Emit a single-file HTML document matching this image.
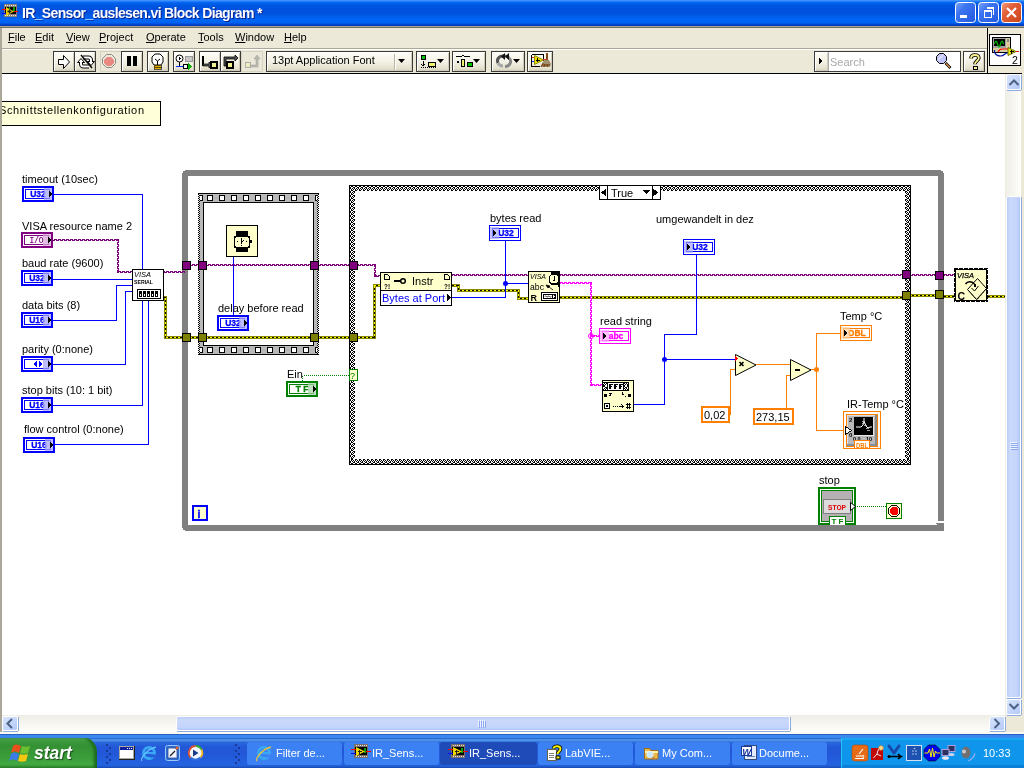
<!DOCTYPE html>
<html><head><meta charset="utf-8">
<style>
html,body{margin:0;padding:0;width:1024px;height:768px;overflow:hidden;background:#fff;font-family:"Liberation Sans",sans-serif;}
.a{position:absolute;box-sizing:border-box;will-change:transform;}
#title{left:0;top:0;width:1024px;height:26px;background:linear-gradient(to bottom,#3F95FE 0px,#3A8DFB 1px,#0A6CF8 2px,#0062EE 3px,#0058E0 5px,#0052DE 8px,#0052DE 13px,#005CEA 16px,#0066F5 20px,#0062F0 23px,#0048D4 24px,#003CC0 25px);}
#title .t{left:22px;top:5px;color:#fff;font-weight:bold;font-size:14px;white-space:nowrap;letter-spacing:-0.65px;text-shadow:1px 1px 0 #0A1E8C;}
.menu{top:28px;height:20px;font-size:11px;color:#000;}
.menu span{position:absolute;top:3px;white-space:nowrap;}
.tb{top:51px;height:22px;width:22px;border:1px solid #3C3C3C;background:linear-gradient(to bottom,#FBFAF4,#E8E5D6);border-radius:1px;}
.btn{top:51px;height:21px;border:1px solid #3C3B37;background:linear-gradient(to bottom,#FEFDF6 0%,#F4F2E6 50%,#E3DFCC 90%,#C9C5B0 100%);box-shadow:inset 1px 1px 0 #fff,inset -1px -1px 0 #CFCBB8;}
.btnd{top:51px;height:21px;border:1px solid #D5D2C2;background:#EBE8DA;}
</style></head>
<body>
<!-- window frame -->
<div class="a" id="title"><div class="a t">IR_Sensor_auslesen.vi Block Diagram *</div></div>
<div class="a" style="left:0;top:26px;width:1024px;height:1px;background:#A8A48E"></div>
<div class="a" style="left:0;top:27px;width:1024px;height:1px;background:#716F64"></div>
<div class="a" style="left:0;top:28px;width:1024px;height:46px;background:#ECE9D8"></div>
<div class="a" style="left:0;top:28px;width:2px;height:706px;background:#ACA899"></div>
<div class="a" style="left:2px;top:48px;width:985px;height:1px;background:#ACA899"></div>
<div class="a" style="left:2px;top:49px;width:985px;height:1px;background:#FFFFFF"></div>
<div class="a" style="left:987px;top:28px;width:1px;height:45px;background:#000"></div>
<div class="a" style="left:2px;top:73px;width:1020px;height:1px;background:#000"></div>
<div class="a menu" style="left:0;width:987px;">
 <span style="left:8px"><u>F</u>ile</span>
 <span style="left:35px"><u>E</u>dit</span>
 <span style="left:66px"><u>V</u>iew</span>
 <span style="left:99px"><u>P</u>roject</span>
 <span style="left:146px"><u>O</u>perate</span>
 <span style="left:198px"><u>T</u>ools</span>
 <span style="left:235px"><u>W</u>indow</span>
 <span style="left:284px"><u>H</u>elp</span>
</div>

<!-- toolbar buttons -->
<div class="a btn" style="left:53px;width:22px"></div>
<div class="a btn" style="left:74px;width:22px"></div>
<div class="a btnd" style="left:100px;width:22px"></div>
<div class="a btn" style="left:121px;width:22px"></div>
<div class="a btn" style="left:147px;width:22px"></div>
<div class="a btn" style="left:173px;width:22px"></div>
<div class="a btn" style="left:199px;width:22px"></div>
<div class="a btn" style="left:220px;width:21px"></div>
<div class="a btnd" style="left:241px;width:22px"></div>
<div class="a btn" style="left:266px;width:147px"></div>
<div class="a btn" style="left:416px;width:34px"></div>
<div class="a btn" style="left:452px;width:34px"></div>
<div class="a btn" style="left:491px;width:34px"></div>
<div class="a btn" style="left:527px;width:26px"></div>
<div class="a btn" style="left:963px;width:22px"></div>
<div class="a" style="left:814px;top:51px;width:147px;height:21px;border:1px solid #3C3C3C;background:#fff"></div>
<div class="a btn" style="left:815px;top:52px;width:14px;height:19px;border:none;border-right:1px solid #aaa"></div>
<div class="a" style="left:989px;top:34px;width:32px;height:32px;border:1px solid #000;background:#fff"></div>
<div class="a" style="left:272px;top:54px;font-size:11px;white-space:nowrap;color:#000">13pt Application Font</div>
<div class="a" style="left:830px;top:56px;font-size:11px;white-space:nowrap;color:#A8A8A8">Search</div>
<svg class="a" style="left:0;top:0" width="1024" height="74" shape-rendering="crispEdges">
 <!-- run arrow -->
 <path d="M58.5 59.5h5v-4l6 6.5-6 6.5v-4h-5z" fill="#fff" stroke="#000" shape-rendering="auto"/>
 <!-- run continuously -->
 <g shape-rendering="auto" fill="none">
  <path d="M83 57.5h5.5a2.5 2.5 0 0 1 2.5 2.5v1" stroke="#000" stroke-width="4"/>
  <path d="M89 66.5h-5.5a2.5 2.5 0 0 1-2.5-2.5v-1" stroke="#000" stroke-width="4"/>
  <path d="M87.5 61.5h7l-3.5 4z" fill="#fff" stroke="#000"/>
  <path d="M77.5 62.5h7l-3.5-4z" fill="#fff" stroke="#000"/>
  <path d="M83 57.5h5.5a2.5 2.5 0 0 1 2.5 2.5v2" stroke="#fff" stroke-width="2"/>
  <path d="M89 66.5h-5.5a2.5 2.5 0 0 1-2.5-2.5v-2" stroke="#fff" stroke-width="2"/>
  <path d="M81 55l11 13" stroke="#000" stroke-width="1.4"/>
 </g>
 <!-- abort -->
 <path d="M106.5 54.5h5l4 4v5l-4 4h-5l-4-4v-5z" fill="none" stroke="#8C8A80" shape-rendering="auto"/>
 <path d="M107 57h4l3 3v3l-3 3h-4l-3-3v-3z" fill="#E88880" shape-rendering="auto"/>
 <!-- pause -->
 <rect x="127" y="56" width="4" height="10" fill="#000"/>
 <rect x="133" y="56" width="4" height="10" fill="#000"/>
 <!-- bulb -->
 <path d="M155 54h5l3 3v5l-2 3h-7l-2-3v-5z" fill="#fff" stroke="#000" shape-rendering="auto"/>
 <path d="M155 59l2.5 2 2.5-2M157.5 61v4" fill="none" stroke="#000" shape-rendering="auto"/>
 <rect x="154" y="65" width="7" height="2" fill="#E0B000" stroke="#000" stroke-width="0.6"/>
 <rect x="154" y="67" width="7" height="2" fill="#E0B000" stroke="#000" stroke-width="0.6"/>
 <!-- retain -->
 <circle cx="179.5" cy="58.5" r="3.5" fill="#fff" stroke="#000" shape-rendering="auto"/>
 <path d="M178.5 56.5l2.5 2-2.5 2z" fill="#000"/>
 <rect x="185" y="56" width="7" height="5" fill="#C8C8C8" stroke="#999"/>
 <path d="M179.5 62v4" stroke="#000"/>
 <rect x="176" y="66" width="13" height="1" fill="#0030FF"/>
 <rect x="183" y="64" width="4" height="4" fill="#fff" stroke="#000"/>
 <path d="M188 63l4 3.5-4 3.5z" fill="#00B000"/>
 <!-- step into -->
 <path d="M203 56v9h5" fill="none" stroke="#000" stroke-width="2"/>
 <path d="M203 64h6v-2l3 3-3 3v-2h-6z" fill="#555" stroke="#000" stroke-width="0.7" shape-rendering="auto"/>
 <rect x="211" y="62" width="6" height="6" fill="#F0F090" stroke="#000" stroke-width="1.5"/>
 <!-- step over -->
 <path d="M224 66v-9h11v-2l3 3-3 3v-2h-9v7z" fill="#555" stroke="#000" stroke-width="0.8" shape-rendering="auto"/>
 <rect x="227" y="62" width="6" height="6" fill="#F0F090" stroke="#000" stroke-width="1.5"/>
 <!-- step out disabled -->
 <rect x="245" y="62" width="5" height="5" fill="#EEEEC0" stroke="#B0B0A8"/>
 <path d="M250 65h6v-6h-2l3-4 3 4h-2v8h-8z" fill="#B8B8B0" stroke="#A8A8A0" stroke-width="0.6" shape-rendering="auto"/>
 <!-- font dropdown -->
 <rect x="394" y="54" width="1" height="16" fill="#B8B4A2"/>
 <rect x="395" y="54" width="1" height="16" fill="#fff"/>
 <path d="M398 59h7l-3.5 4z" fill="#000" shape-rendering="auto"/>
 <!-- align -->
 <rect x="421" y="55" width="4" height="4" fill="#00C000" stroke="#000"/>
 <path d="M423 61v5M421 64l2 2 2-2" stroke="#000" fill="none"/>
 <rect x="428" y="62" width="7" height="4" fill="#F0F070" stroke="#000"/>
 <path d="M421 67h15" stroke="#000" stroke-dasharray="1 1"/>
 <path d="M437 59h7l-3.5 4z" fill="#000" shape-rendering="auto"/>
 <!-- distribute -->
 <path d="M456 56h6l1-1 1 1h6" stroke="#000" fill="none"/>
 <rect x="457" y="61" width="2" height="2" fill="#000"/>
 <rect x="461" y="59" width="3" height="7" fill="#F0F070" stroke="#000"/>
 <rect x="467" y="62" width="5" height="4" fill="#00C000" stroke="#000"/>
 <path d="M473 59h7l-3.5 4z" fill="#000" shape-rendering="auto"/>
 <!-- reorder -->
 <g shape-rendering="auto" fill="none">
  <path d="M498 63a5.5 5 0 0 1 6-7" stroke="#555" stroke-width="3"/>
  <path d="M509 58a5.5 5 0 0 1-4 8.5" stroke="#888" stroke-width="3"/>
  <path d="M498 63a5.5 5 0 0 0 5 3" stroke="#A8A8A8" stroke-width="3"/>
  <path d="M504 56a5.5 5 0 0 1 5 2" stroke="#777" stroke-width="3"/>
 </g>
 <path d="M501 56.5l4-3.5v7z M505 56.5l4-3.5v7z" fill="#111" shape-rendering="auto"/>
 <path d="M513 59h7l-3.5 4z" fill="#000" shape-rendering="auto"/>
 <!-- cleanup -->
 <path d="M531.5 54.5h11.5v6M531.5 54.5v12h8" fill="none" stroke="#000"/>
 <rect x="532" y="57" width="3" height="1" fill="#E03030"/>
 <rect x="532" y="61" width="3" height="1" fill="#3030E0"/>
 <path d="M534.5 55.5l9 4.5-9 4.5z" fill="#F0E000" stroke="#909000" shape-rendering="auto"/>
 <path d="M537.5 58v4M535.5 60h4" stroke="#000"/>
 <rect x="543" y="59" width="3" height="1" fill="#E03030"/>
 <rect x="546" y="53" width="2" height="7" fill="#8B4513"/>
 <path d="M544 60h5l2 4-1 3h-9l1-3z" fill="#A09070" shape-rendering="auto"/>
 <path d="M541 67l2-4M544 67l1-3M547 67l1-3M542 65h8" stroke="#6A4010" stroke-width="1" shape-rendering="auto"/>
 <path d="M543 66l1-1M546 66l1-1" stroke="#D04020"/>
 <!-- search -->
 <path d="M819 58l3 3-3 3z" fill="#000"/>
 <path d="M939.5 53.5h4l3 3v4l-3 3h-4l-3-3v-4z" fill="#C0C4F8" stroke="#000" shape-rendering="auto"/>
 <path d="M938 60l5-5" stroke="#E8E8FF" stroke-width="1.5" shape-rendering="auto"/>
 <path d="M945.5 63l5 5" stroke="#000" stroke-width="2.6" shape-rendering="auto"/>
 <path d="M946 63.5l4 4" stroke="#D89050" stroke-width="1.3" shape-rendering="auto"/>
 <!-- help -->
 <g shape-rendering="auto" fill="none">
  <path d="M971 58.5c0-2.5 2-3.5 4-3.5s3.8 1 3.8 3c0 2.8-3.8 3.2-3.8 6.2" stroke="#000" stroke-width="3.6"/>
  <path d="M971 58.5c0-2.5 2-3.5 4-3.5s3.8 1 3.8 3c0 2.8-3.8 3.2-3.8 6.2" stroke="#F8F090" stroke-width="1.8"/>
 </g>
 <rect x="973" y="66" width="4" height="3" fill="#F8F090" stroke="#000" stroke-width="1"/>
 <!-- vi icon -->
 <rect x="992" y="37" width="19" height="16" fill="#000"/>
 <rect x="993" y="38" width="17" height="14" fill="#D8D0A0"/>
 <rect x="993" y="38" width="13" height="10" fill="#A0A0A0"/>
 <rect x="994" y="39" width="11" height="7" fill="#000"/>
 <path d="M994.5 44c1-4 2-4 3 0s2 4 3 0 2-4 3 0" fill="none" stroke="#00C000" stroke-width="1.2" shape-rendering="auto"/>
 <rect x="1007" y="39" width="2" height="3" fill="#888"/>
 <rect x="1007" y="43" width="2" height="3" fill="#E8C090"/>
 <path d="M994.5 50v2c1 3 3 4 6 4s4-2 6-3h3" fill="none" stroke="#0010A0" stroke-width="1.2" shape-rendering="auto"/>
 <path d="M998 52c1-2 2-3 4-3h7" fill="none" stroke="#FF0000" stroke-width="1.1" shape-rendering="auto"/>
 <path d="M1008 47.5l8 4-8 4z" fill="#F0F000" stroke="#707000" shape-rendering="auto"/>
 <path d="M1011.5 49.5v4M1009.5 51.5h4" stroke="#000" stroke-width="1.2"/>
 <rect x="1016" y="51" width="3" height="1" fill="#FF0000"/>
 <text x="1012" y="64" font-family="Liberation Sans" font-size="10.5" fill="#000">2</text>
</svg>

<!-- canvas -->
<div class="a" style="left:2px;top:74px;width:1003px;height:641px;background:#fff"></div>
<!-- right frame -->
<div class="a" style="left:1021px;top:74px;width:3px;height:660px;background:#ECE9D8"></div>
<!-- v scrollbar -->
<div class="a" style="left:1005px;top:74px;width:16px;height:642px;background:linear-gradient(to right,#EEEDE5,#FEFEFB)"></div>
<!-- h scrollbar -->
<div class="a" style="left:2px;top:715px;width:1003px;height:17px;background:linear-gradient(to bottom,#EEEDE5,#FEFEFB)"></div>
<div class="a" style="left:1005px;top:716px;width:16px;height:16px;background:#ECE9D8"></div>
<div class="a" style="left:0;top:732px;width:1024px;height:2px;background:#FBF9F0"></div>
<svg class="a" style="left:2px;top:74px;will-change:transform" width="1003" height="641" shape-rendering="crispEdges">
<defs><pattern id="chk" width="4" height="4" patternUnits="userSpaceOnUse"><rect width="4" height="4" fill="#fff"/><rect x="0" y="0" width="1" height="1" fill="#000"/><rect x="2" y="0" width="2" height="1" fill="#000"/><rect x="1" y="1" width="1" height="1" fill="#000"/><rect x="3" y="1" width="1" height="1" fill="#000"/><rect x="0" y="2" width="1" height="2" fill="#000"/><rect x="2" y="2" width="1" height="1" fill="#000"/><rect x="1" y="3" width="2" height="1" fill="#000"/></pattern><pattern id="n7F007Fh" width="4" height="2" patternUnits="userSpaceOnUse"><rect width="3" height="1" fill="#7F007F"/><rect y="1" width="1" height="1" fill="#7F007F"/><rect x="2" y="1" width="2" height="1" fill="#7F007F"/></pattern><pattern id="n7F007Fv" width="2" height="4" patternUnits="userSpaceOnUse"><rect width="1" height="3" fill="#7F007F"/><rect x="1" width="1" height="1" fill="#7F007F"/><rect x="1" y="2" width="1" height="2" fill="#7F007F"/></pattern><pattern id="nFF00FFh" width="4" height="2" patternUnits="userSpaceOnUse"><rect width="3" height="1" fill="#FF00FF"/><rect y="1" width="1" height="1" fill="#FF00FF"/><rect x="2" y="1" width="2" height="1" fill="#FF00FF"/></pattern><pattern id="nFF00FFv" width="2" height="4" patternUnits="userSpaceOnUse"><rect width="1" height="3" fill="#FF00FF"/><rect x="1" width="1" height="1" fill="#FF00FF"/><rect x="1" y="2" width="1" height="2" fill="#FF00FF"/></pattern><pattern id="eh" width="4" height="1" patternUnits="userSpaceOnUse"><rect width="4" height="1" fill="#FFFF00"/><rect width="2" height="1" fill="#000"/></pattern><pattern id="ev" width="1" height="4" patternUnits="userSpaceOnUse"><rect width="1" height="4" fill="#FFFF00"/><rect width="1" height="2" fill="#000"/></pattern></defs>
<g transform="translate(-2,-74)">
<rect x="-1.5" y="101.5" width="162" height="24" fill="#FFFFD9" stroke="#000" stroke-width="1" />
<text x="-1" y="114" font-family="Liberation Sans" font-size="11" fill="#000" textLength="145" lengthAdjust="spacing">Schnittstellenkonfiguration</text>

<rect x="182" y="173" width="6" height="355" fill="#808080" />
<rect x="185" y="170" width="756" height="6" fill="#808080" />
<rect x="183" y="171" width="4" height="4" fill="#808080" />
<rect x="938" y="173" width="6" height="348" fill="#808080" />
<rect x="936" y="523" width="8" height="1" fill="#808080" />
<rect x="937" y="524" width="7" height="1" fill="#808080" />
<rect x="940" y="530" width="3" height="1" fill="#fff" />
<rect x="939" y="171" width="4" height="4" fill="#808080" />
<rect x="185" y="525" width="759" height="6" fill="#808080" />
<rect x="183" y="526" width="4" height="4" fill="#808080" />
<rect x="198.5" y="193.5" width="120" height="161" fill="#B8B8B8" stroke="#000" stroke-width="1" />
<defs><pattern id="sqL" width="2" height="2" x="198" y="0" patternUnits="userSpaceOnUse"><rect width="2" height="2" fill="#C8C8C8"/><rect x="0" y="0" width="1" height="1" fill="#000"/><rect x="0" y="1" width="1" height="1" fill="#fff"/><rect x="1" y="1" width="1" height="1" fill="#000"/></pattern><pattern id="sqR" width="2" height="2" x="317" y="0" patternUnits="userSpaceOnUse"><rect width="2" height="2" fill="#C8C8C8"/><rect x="1" y="0" width="1" height="1" fill="#000"/><rect x="1" y="1" width="1" height="1" fill="#fff"/><rect x="0" y="1" width="1" height="1" fill="#000"/></pattern></defs>
<rect x="198" y="194" width="2" height="160" fill="url(#sqL)" />
<rect x="317" y="194" width="2" height="160" fill="url(#sqR)" />
<rect x="203.5" y="202.5" width="110" height="143" fill="#fff" stroke="#000" stroke-width="1" />
<rect x="207.5" y="195.5" width="5" height="5" fill="#fff" stroke="#000" stroke-width="1" />
<rect x="207.5" y="347.5" width="5" height="5" fill="#fff" stroke="#000" stroke-width="1" />
<rect x="219.5" y="195.5" width="5" height="5" fill="#fff" stroke="#000" stroke-width="1" />
<rect x="219.5" y="347.5" width="5" height="5" fill="#fff" stroke="#000" stroke-width="1" />
<rect x="231.5" y="195.5" width="5" height="5" fill="#fff" stroke="#000" stroke-width="1" />
<rect x="231.5" y="347.5" width="5" height="5" fill="#fff" stroke="#000" stroke-width="1" />
<rect x="243.5" y="195.5" width="5" height="5" fill="#fff" stroke="#000" stroke-width="1" />
<rect x="243.5" y="347.5" width="5" height="5" fill="#fff" stroke="#000" stroke-width="1" />
<rect x="255.5" y="195.5" width="5" height="5" fill="#fff" stroke="#000" stroke-width="1" />
<rect x="255.5" y="347.5" width="5" height="5" fill="#fff" stroke="#000" stroke-width="1" />
<rect x="267.5" y="195.5" width="5" height="5" fill="#fff" stroke="#000" stroke-width="1" />
<rect x="267.5" y="347.5" width="5" height="5" fill="#fff" stroke="#000" stroke-width="1" />
<rect x="279.5" y="195.5" width="5" height="5" fill="#fff" stroke="#000" stroke-width="1" />
<rect x="279.5" y="347.5" width="5" height="5" fill="#fff" stroke="#000" stroke-width="1" />
<rect x="291.5" y="195.5" width="5" height="5" fill="#fff" stroke="#000" stroke-width="1" />
<rect x="291.5" y="347.5" width="5" height="5" fill="#fff" stroke="#000" stroke-width="1" />
<rect x="303.5" y="195.5" width="5" height="5" fill="#fff" stroke="#000" stroke-width="1" />
<rect x="303.5" y="347.5" width="5" height="5" fill="#fff" stroke="#000" stroke-width="1" />
<rect x="200" y="195" width="2" height="6" fill="#fff" />
<rect x="202" y="195" width="1" height="6" fill="#000" />
<rect x="200" y="195" width="2" height="1" fill="#000" />
<rect x="200" y="200" width="2" height="1" fill="#000" />
<rect x="200" y="347" width="2" height="6" fill="#fff" />
<rect x="202" y="347" width="1" height="6" fill="#000" />
<rect x="200" y="347" width="2" height="1" fill="#000" />
<rect x="200" y="352" width="2" height="1" fill="#000" />
<rect x="315" y="195" width="2" height="6" fill="#fff" />
<rect x="315" y="195" width="1" height="6" fill="#000" />
<rect x="315" y="195" width="2" height="1" fill="#000" />
<rect x="315" y="200" width="2" height="1" fill="#000" />
<rect x="315" y="347" width="2" height="6" fill="#fff" />
<rect x="315" y="347" width="1" height="6" fill="#000" />
<rect x="315" y="347" width="2" height="1" fill="#000" />
<rect x="315" y="352" width="2" height="1" fill="#000" />
<defs>
<pattern id="pL" width="5" height="4" x="350" y="205" patternUnits="userSpaceOnUse"><rect width="5" height="4" fill="#fff"/><rect x="1" y="0" width="1" height="1" fill="#000"/><rect x="3" y="0" width="1" height="1" fill="#000"/><rect x="1" y="1" width="1" height="1" fill="#000"/><rect x="2" y="1" width="1" height="1" fill="#000"/><rect x="0" y="2" width="1" height="1" fill="#000"/><rect x="3" y="2" width="1" height="1" fill="#000"/><rect x="4" y="2" width="1" height="1" fill="#000"/><rect x="0" y="3" width="1" height="1" fill="#000"/><rect x="2" y="3" width="1" height="1" fill="#000"/><rect x="4" y="3" width="1" height="1" fill="#000"/></pattern>
<pattern id="pR" width="5" height="4" x="905" y="205" patternUnits="userSpaceOnUse"><rect width="5" height="4" fill="#fff"/><rect x="3" y="0" width="1" height="1" fill="#000"/><rect x="1" y="0" width="1" height="1" fill="#000"/><rect x="3" y="1" width="1" height="1" fill="#000"/><rect x="2" y="1" width="1" height="1" fill="#000"/><rect x="4" y="2" width="1" height="1" fill="#000"/><rect x="1" y="2" width="1" height="1" fill="#000"/><rect x="0" y="2" width="1" height="1" fill="#000"/><rect x="4" y="3" width="1" height="1" fill="#000"/><rect x="2" y="3" width="1" height="1" fill="#000"/><rect x="0" y="3" width="1" height="1" fill="#000"/></pattern>
<pattern id="pT" width="4" height="5" x="349" y="186" patternUnits="userSpaceOnUse"><rect width="4" height="5" fill="#fff"/><rect x="0" y="1" width="1" height="1" fill="#000"/><rect x="0" y="3" width="1" height="1" fill="#000"/><rect x="1" y="1" width="1" height="1" fill="#000"/><rect x="1" y="2" width="1" height="1" fill="#000"/><rect x="2" y="0" width="1" height="1" fill="#000"/><rect x="2" y="3" width="1" height="1" fill="#000"/><rect x="2" y="4" width="1" height="1" fill="#000"/><rect x="3" y="0" width="1" height="1" fill="#000"/><rect x="3" y="2" width="1" height="1" fill="#000"/><rect x="3" y="4" width="1" height="1" fill="#000"/></pattern>
<pattern id="pB" width="4" height="5" x="349" y="459" patternUnits="userSpaceOnUse"><rect width="4" height="5" fill="#fff"/><rect x="0" y="3" width="1" height="1" fill="#000"/><rect x="0" y="1" width="1" height="1" fill="#000"/><rect x="1" y="3" width="1" height="1" fill="#000"/><rect x="1" y="2" width="1" height="1" fill="#000"/><rect x="2" y="4" width="1" height="1" fill="#000"/><rect x="2" y="1" width="1" height="1" fill="#000"/><rect x="2" y="0" width="1" height="1" fill="#000"/><rect x="3" y="4" width="1" height="1" fill="#000"/><rect x="3" y="2" width="1" height="1" fill="#000"/><rect x="3" y="0" width="1" height="1" fill="#000"/></pattern>
</defs>
<rect x="350" y="186" width="5" height="278" fill="url(#pL)" />
<rect x="905" y="186" width="5" height="278" fill="url(#pR)" />
<rect x="350" y="186" width="560" height="5" fill="url(#pT)" />
<rect x="350" y="459" width="560" height="5" fill="url(#pB)" />
<rect x="349.5" y="185.5" width="561" height="279" fill="none" stroke="#000" stroke-width="1" />
<rect x="599.5" y="185.5" width="61" height="14" fill="#fff" stroke="#000" stroke-width="1" />
<rect x="607" y="185" width="1" height="15" fill="#000" />
<rect x="652" y="185" width="1" height="15" fill="#000" />
<path d="M601 192.5l5-4v8z" fill="#000"/>
<path d="M658 192.5l-5-4v8z" fill="#000"/>
<path d="M643 190h7l-3.5 4z" fill="#000"/>
<text x="611" y="197" font-family="Liberation Sans" font-size="11" fill="#000" >True</text>
<polyline points="54.5,194.5 142.5,194.5 142.5,268.5" fill="none" stroke="#0000FF" stroke-width="1" stroke-linecap="square"/>
<polyline points="53.5,279.5 131.5,279.5" fill="none" stroke="#0000FF" stroke-width="1" stroke-linecap="square"/>
<polyline points="53.5,320.5 116.5,320.5 116.5,285.5 131.5,285.5" fill="none" stroke="#0000FF" stroke-width="1" stroke-linecap="square"/>
<polyline points="53.5,364.5 125.5,364.5 125.5,291.5 131.5,291.5" fill="none" stroke="#0000FF" stroke-width="1" stroke-linecap="square"/>
<polyline points="53.5,405.5 142.5,405.5 142.5,301.5" fill="none" stroke="#0000FF" stroke-width="1" stroke-linecap="square"/>
<polyline points="55.5,444.5 148.5,444.5 148.5,301.5" fill="none" stroke="#0000FF" stroke-width="1" stroke-linecap="square"/>
<polyline points="233.5,257.5 233.5,314.5" fill="none" stroke="#0000FF" stroke-width="1" stroke-linecap="square"/>
<rect x="53" y="239" width="66" height="2" fill="url(#n7F007Fh)"/>
<rect x="117" y="239" width="2" height="34" fill="url(#n7F007Fv)"/>
<rect x="117" y="271" width="16" height="2" fill="url(#n7F007Fh)"/>
<rect x="164" y="271" width="21" height="2" fill="url(#n7F007Fh)"/>
<rect x="189" y="264" width="19" height="2" fill="url(#n7F007Fh)"/>
<rect x="206" y="264" width="146" height="2" fill="url(#n7F007Fh)"/>
<rect x="357" y="264" width="19" height="2" fill="url(#n7F007Fh)"/>
<rect x="374" y="264" width="2" height="13" fill="url(#n7F007Fv)"/>
<rect x="374" y="275" width="8" height="2" fill="url(#n7F007Fh)"/>
<rect x="452" y="274" width="78" height="2" fill="url(#n7F007Fh)"/>
<rect x="560" y="274" width="345" height="2" fill="url(#n7F007Fh)"/>
<rect x="910" y="274" width="28" height="2" fill="url(#n7F007Fh)"/>
<rect x="943" y="274" width="13" height="2" fill="url(#n7F007Fh)"/>
<rect x="163" y="296" width="4" height="3" fill="#8A8A00"/>
<rect x="164" y="296" width="3" height="43" fill="#8A8A00"/>
<rect x="164" y="336" width="188" height="3" fill="#8A8A00"/>
<rect x="164" y="297" width="2" height="1" fill="url(#eh)"/>
<rect x="165" y="297" width="1" height="41" fill="url(#ev)"/>
<rect x="165" y="337" width="186" height="1" fill="url(#eh)"/>
<rect x="356" y="336" width="20" height="3" fill="#8A8A00"/>
<rect x="373" y="284" width="3" height="55" fill="#8A8A00"/>
<rect x="373" y="284" width="9" height="3" fill="#8A8A00"/>
<rect x="357" y="337" width="18" height="1" fill="url(#eh)"/>
<rect x="374" y="285" width="1" height="53" fill="url(#ev)"/>
<rect x="374" y="285" width="7" height="1" fill="url(#eh)"/>
<rect x="451" y="284" width="9" height="3" fill="#8A8A00"/>
<rect x="457" y="284" width="3" height="8" fill="#8A8A00"/>
<rect x="457" y="289" width="63" height="3" fill="#8A8A00"/>
<rect x="517" y="289" width="3" height="11" fill="#8A8A00"/>
<rect x="517" y="297" width="13" height="3" fill="#8A8A00"/>
<rect x="452" y="285" width="7" height="1" fill="url(#eh)"/>
<rect x="458" y="285" width="1" height="6" fill="url(#ev)"/>
<rect x="458" y="290" width="61" height="1" fill="url(#eh)"/>
<rect x="518" y="290" width="1" height="9" fill="url(#ev)"/>
<rect x="518" y="298" width="11" height="1" fill="url(#eh)"/>
<rect x="559" y="296" width="32" height="3" fill="#8A8A00"/>
<rect x="560" y="297" width="30" height="1" fill="url(#eh)"/>
<rect x="592" y="296" width="313" height="3" fill="#8A8A00"/>
<rect x="593" y="297" width="311" height="1" fill="url(#eh)"/>
<rect x="909" y="294" width="29" height="3" fill="#8A8A00"/>
<rect x="910" y="295" width="27" height="1" fill="url(#eh)"/>
<rect x="942" y="295" width="14" height="3" fill="#8A8A00"/>
<rect x="943" y="296" width="12" height="1" fill="url(#eh)"/>
<rect x="987" y="295" width="20" height="3" fill="#8A8A00"/>
<rect x="988" y="296" width="18" height="1" fill="url(#eh)"/>
<polyline points="452.5,297.5 505.5,297.5 505.5,241.5" fill="none" stroke="#0000FF" stroke-width="1" stroke-linecap="square"/>
<polyline points="505.5,283.5 528.5,283.5" fill="none" stroke="#0000FF" stroke-width="1" stroke-linecap="square"/>
<circle cx="505.5" cy="283.5" r="2.5" fill="#0000FF" shape-rendering="auto"/>
<rect x="560" y="282" width="32" height="2" fill="url(#nFF00FFh)"/>
<rect x="590" y="282" width="2" height="104" fill="url(#nFF00FFv)"/>
<rect x="590" y="384" width="14" height="2" fill="url(#nFF00FFh)"/>
<rect x="590" y="335" width="11" height="2" fill="url(#nFF00FFh)"/>
<circle cx="591" cy="336" r="2.5" fill="none" stroke="#FF00FF" shape-rendering="auto"/>
<polyline points="634.5,404.5 664.5,404.5 664.5,334.5 696.5,334.5 696.5,255.5" fill="none" stroke="#0000FF" stroke-width="1" stroke-linecap="square"/>
<polyline points="664.5,359.5 735.5,359.5" fill="none" stroke="#0000FF" stroke-width="1" stroke-linecap="square"/>
<circle cx="664.5" cy="359.5" r="2.5" fill="#0000FF" shape-rendering="auto"/>
<polyline points="730.5,414.5 730.5,369.5 735.5,369.5" fill="none" stroke="#FF7F00" stroke-width="1" stroke-linecap="square"/>
<polyline points="756.5,364.5 790.5,364.5" fill="none" stroke="#FF7F00" stroke-width="1" stroke-linecap="square"/>
<polyline points="786.5,408.5 786.5,375.5 790.5,375.5" fill="none" stroke="#FF7F00" stroke-width="1" stroke-linecap="square"/>
<polyline points="811.5,369.5 816.5,369.5" fill="none" stroke="#FF7F00" stroke-width="1" stroke-linecap="square"/>
<polyline points="840.5,333.5 816.5,333.5 816.5,430.5 846.5,430.5" fill="none" stroke="#FF7F00" stroke-width="1" stroke-linecap="square"/>
<circle cx="816.5" cy="369.5" r="2.5" fill="#FF7F00" shape-rendering="auto"/>
<polyline points="302.5,380.5 302.5,375.5 349.5,375.5" fill="none" stroke="#008000" stroke-width="1" stroke-dasharray="1 1"/>
<polyline points="856.5,506.5 886.5,506.5" fill="none" stroke="#008000" stroke-width="1" stroke-dasharray="1 1"/>
<rect x="182.5" y="261.5" width="8" height="8" fill="#800080" stroke="#000" stroke-width="1" />
<rect x="182.5" y="333.5" width="8" height="8" fill="#808000" stroke="#000" stroke-width="1" />
<rect x="198.5" y="261.5" width="8" height="8" fill="#800080" stroke="#000" stroke-width="1" />
<rect x="198.5" y="333.5" width="8" height="8" fill="#808000" stroke="#000" stroke-width="1" />
<rect x="310.5" y="261.5" width="8" height="8" fill="#800080" stroke="#000" stroke-width="1" />
<rect x="310.5" y="333.5" width="8" height="8" fill="#808000" stroke="#000" stroke-width="1" />
<rect x="349.5" y="261.5" width="8" height="8" fill="#800080" stroke="#000" stroke-width="1" />
<rect x="349.5" y="333.5" width="8" height="8" fill="#808000" stroke="#000" stroke-width="1" />
<rect x="902.5" y="270.5" width="8" height="8" fill="#800080" stroke="#000" stroke-width="1" />
<rect x="902.5" y="291.5" width="8" height="8" fill="#808000" stroke="#000" stroke-width="1" />
<rect x="935.5" y="271.5" width="8" height="8" fill="#800080" stroke="#000" stroke-width="1" />
<rect x="935.5" y="290.5" width="8" height="8" fill="#808000" stroke="#000" stroke-width="1" />
<rect x="22" y="186" width="32" height="16" fill="#0000FF" />
<rect x="24" y="188" width="28" height="12" fill="#fff" />
<rect x="25.5" y="189.5" width="24" height="9" fill="none" stroke="#0000FF" stroke-width="1" />
<text x="38" y="197" font-family="Liberation Sans" font-size="8.5" fill="#0000FF" font-weight="bold" text-anchor="middle" stroke="#0000FF" stroke-width="0.3">U32</text>
<rect x="44" y="188" width="8" height="12" fill="#A8A8FF" opacity="0.75"/>
<path d="M49 190.5l3 3.5-3 3.5z" fill="#000"/>
<rect x="21" y="232" width="32" height="16" fill="#800080" />
<rect x="23" y="234" width="28" height="12" fill="#fff" />
<rect x="24.5" y="235.5" width="24" height="9" fill="none" stroke="#800080" stroke-width="1" />
<text x="37" y="243" font-family="Liberation Sans" font-size="8.5" fill="#800080" font-weight="bold" text-anchor="middle" stroke="#800080" stroke-width="0.3"></text>
<rect x="43" y="234" width="8" height="12" fill="#D8A8D8" opacity="0.75"/>
<path d="M48 236.5l3 3.5-3 3.5z" fill="#000"/>
<text x="29.5" y="243" font-family="Liberation Mono" font-size="9" fill="#800080" stroke="#800080" stroke-width="0.2" textLength="14" lengthAdjust="spacingAndGlyphs">I/O</text>
<rect x="21" y="270" width="32" height="16" fill="#0000FF" />
<rect x="23" y="272" width="28" height="12" fill="#fff" />
<rect x="24.5" y="273.5" width="24" height="9" fill="none" stroke="#0000FF" stroke-width="1" />
<text x="37" y="281" font-family="Liberation Sans" font-size="8.5" fill="#0000FF" font-weight="bold" text-anchor="middle" stroke="#0000FF" stroke-width="0.3">U32</text>
<rect x="43" y="272" width="8" height="12" fill="#A8A8FF" opacity="0.75"/>
<path d="M48 274.5l3 3.5-3 3.5z" fill="#000"/>
<rect x="21" y="312" width="32" height="16" fill="#0000FF" />
<rect x="23" y="314" width="28" height="12" fill="#fff" />
<rect x="24.5" y="315.5" width="24" height="9" fill="none" stroke="#0000FF" stroke-width="1" />
<text x="37" y="323" font-family="Liberation Sans" font-size="8.5" fill="#0000FF" font-weight="bold" text-anchor="middle" stroke="#0000FF" stroke-width="0.3">U16</text>
<rect x="43" y="314" width="8" height="12" fill="#A8A8FF" opacity="0.75"/>
<path d="M48 316.5l3 3.5-3 3.5z" fill="#000"/>
<rect x="21" y="356" width="32" height="16" fill="#0000FF" />
<rect x="23" y="358" width="28" height="12" fill="#fff" />
<rect x="24.5" y="359.5" width="24" height="9" fill="none" stroke="#0000FF" stroke-width="1" />
<text x="37" y="367" font-family="Liberation Sans" font-size="8.5" fill="#0000FF" font-weight="bold" text-anchor="middle" stroke="#0000FF" stroke-width="0.3"></text>
<rect x="43" y="358" width="8" height="12" fill="#A8A8FF" opacity="0.75"/>
<path d="M48 360.5l3 3.5-3 3.5z" fill="#000"/>
<path d="M34 364l3-3.5v7z M39 360.5l3 3.5-3 3.5z" fill="#0000FF"/>
<rect x="21" y="397" width="32" height="16" fill="#0000FF" />
<rect x="23" y="399" width="28" height="12" fill="#fff" />
<rect x="24.5" y="400.5" width="24" height="9" fill="none" stroke="#0000FF" stroke-width="1" />
<text x="37" y="408" font-family="Liberation Sans" font-size="8.5" fill="#0000FF" font-weight="bold" text-anchor="middle" stroke="#0000FF" stroke-width="0.3">U16</text>
<rect x="43" y="399" width="8" height="12" fill="#A8A8FF" opacity="0.75"/>
<path d="M48 401.5l3 3.5-3 3.5z" fill="#000"/>
<rect x="23" y="437" width="32" height="16" fill="#0000FF" />
<rect x="25" y="439" width="28" height="12" fill="#fff" />
<rect x="26.5" y="440.5" width="24" height="9" fill="none" stroke="#0000FF" stroke-width="1" />
<text x="39" y="448" font-family="Liberation Sans" font-size="8.5" fill="#0000FF" font-weight="bold" text-anchor="middle" stroke="#0000FF" stroke-width="0.3">U16</text>
<rect x="45" y="439" width="8" height="12" fill="#A8A8FF" opacity="0.75"/>
<path d="M50 441.5l3 3.5-3 3.5z" fill="#000"/>
<rect x="217" y="315" width="32" height="16" fill="#0000FF" />
<rect x="219" y="317" width="28" height="12" fill="#fff" />
<rect x="220.5" y="318.5" width="24" height="9" fill="none" stroke="#0000FF" stroke-width="1" />
<text x="233" y="326" font-family="Liberation Sans" font-size="8.5" fill="#0000FF" font-weight="bold" text-anchor="middle" stroke="#0000FF" stroke-width="0.3">U32</text>
<rect x="239" y="317" width="8" height="12" fill="#A8A8FF" opacity="0.75"/>
<path d="M244 319.5l3 3.5-3 3.5z" fill="#000"/>
<rect x="286" y="381" width="32" height="16" fill="#008000" />
<rect x="288" y="383" width="28" height="12" fill="#fff" />
<rect x="289.5" y="384.5" width="24" height="9" fill="none" stroke="#008000" stroke-width="1" />
<text x="302" y="392" font-family="Liberation Sans" font-size="8.5" fill="#008000" font-weight="bold" text-anchor="middle" stroke="#008000" stroke-width="0.3">T F</text>
<rect x="308" y="383" width="8" height="12" fill="#A8D0A8" opacity="0.75"/>
<path d="M313 385.5l3 3.5-3 3.5z" fill="#000"/>
<rect x="489.5" y="225.5" width="31" height="15" fill="none" stroke="#0000FF" stroke-width="1" />
<rect x="490" y="226" width="30" height="14" fill="#fff" />
<rect x="492.5" y="228.5" width="26" height="9" fill="none" stroke="#0000FF" stroke-width="1" />
<text x="506" y="236" font-family="Liberation Sans" font-size="8.5" fill="#0000FF" font-weight="bold" text-anchor="middle" stroke="#0000FF" stroke-width="0.3">U32</text>
<rect x="490" y="227" width="9" height="12" fill="#A8A8FF" opacity="0.7"/>
<path d="M493 229.5l3 3.5-3 3.5z" fill="#000"/>
<rect x="683.5" y="239.5" width="31" height="15" fill="none" stroke="#0000FF" stroke-width="1" />
<rect x="684" y="240" width="30" height="14" fill="#fff" />
<rect x="686.5" y="242.5" width="26" height="9" fill="none" stroke="#0000FF" stroke-width="1" />
<text x="700" y="250" font-family="Liberation Sans" font-size="8.5" fill="#0000FF" font-weight="bold" text-anchor="middle" stroke="#0000FF" stroke-width="0.3">U32</text>
<rect x="684" y="241" width="9" height="12" fill="#A8A8FF" opacity="0.7"/>
<path d="M687 243.5l3 3.5-3 3.5z" fill="#000"/>
<rect x="599.5" y="328.5" width="31" height="15" fill="none" stroke="#FF00FF" stroke-width="1" />
<rect x="600" y="329" width="30" height="14" fill="#fff" />
<rect x="602.5" y="331.5" width="26" height="9" fill="none" stroke="#FF00FF" stroke-width="1" />
<text x="616" y="339" font-family="Liberation Sans" font-size="8.5" fill="#FF00FF" font-weight="bold" text-anchor="middle" stroke="#FF00FF" stroke-width="0.3">abc</text>
<rect x="600" y="330" width="9" height="12" fill="#FFA8FF" opacity="0.7"/>
<path d="M603 332.5l3 3.5-3 3.5z" fill="#000"/>
<rect x="840.5" y="325.5" width="31" height="15" fill="none" stroke="#FF7F00" stroke-width="1" />
<rect x="841" y="326" width="30" height="14" fill="#fff" />
<rect x="843.5" y="328.5" width="26" height="9" fill="none" stroke="#FF7F00" stroke-width="1" />
<text x="857" y="336" font-family="Liberation Sans" font-size="8.5" fill="#FF7F00" font-weight="bold" text-anchor="middle" stroke="#FF7F00" stroke-width="0.3">DBL</text>
<rect x="841" y="327" width="9" height="12" fill="#FFD0A0" opacity="0.7"/>
<path d="M844 329.5l3 3.5-3 3.5z" fill="#000"/>
<text x="22" y="183" font-family="Liberation Sans" font-size="11" fill="#000" >timeout (10sec)</text>
<text x="22" y="230" font-family="Liberation Sans" font-size="11" fill="#000" >VISA resource name 2</text>
<text x="22" y="267" font-family="Liberation Sans" font-size="11" fill="#000" >baud rate (9600)</text>
<text x="22" y="309" font-family="Liberation Sans" font-size="11" fill="#000" >data bits (8)</text>
<text x="22" y="353" font-family="Liberation Sans" font-size="11" fill="#000" >parity (0:none)</text>
<text x="22" y="394" font-family="Liberation Sans" font-size="11" fill="#000" >stop bits (10: 1 bit)</text>
<text x="24" y="433" font-family="Liberation Sans" font-size="11" fill="#000" >flow control (0:none)</text>
<text x="218" y="312" font-family="Liberation Sans" font-size="11" fill="#000" >delay before read</text>
<text x="287" y="378" font-family="Liberation Sans" font-size="11" fill="#000" >Ein</text>
<text x="490" y="222" font-family="Liberation Sans" font-size="11" fill="#000" >bytes read</text>
<text x="656" y="223" font-family="Liberation Sans" font-size="11" fill="#000" >umgewandelt in dez</text>
<text x="600" y="325" font-family="Liberation Sans" font-size="11" fill="#000" >read string</text>
<text x="840" y="320" font-family="Liberation Sans" font-size="11" fill="#000" >Temp °C</text>
<text x="847" y="408" font-family="Liberation Sans" font-size="11" fill="#000" >IR-Temp °C</text>
<text x="819" y="484" font-family="Liberation Sans" font-size="11" fill="#000" >stop</text>
<rect x="132.5" y="269.5" width="31" height="31" fill="#fff" stroke="#000" stroke-width="1" />
<text x="134" y="277" font-family="Liberation Sans" font-size="8" fill="#000" font-style="italic" textLength="17" lengthAdjust="spacingAndGlyphs">VISA</text>
<text x="134" y="284" font-family="Liberation Sans" font-size="6" fill="#000" font-weight="bold" textLength="19" lengthAdjust="spacingAndGlyphs">SERIAL</text>
<rect x="137.5" y="289.5" width="23" height="9" fill="#fff" stroke="#000" stroke-width="1" />
<rect x="139" y="291" width="3" height="6" fill="#000" />
<rect x="140" y="294" width="1" height="2" fill="#fff" />
<rect x="143" y="291" width="3" height="6" fill="#000" />
<rect x="144" y="294" width="1" height="2" fill="#fff" />
<rect x="147" y="291" width="3" height="6" fill="#000" />
<rect x="148" y="294" width="1" height="2" fill="#fff" />
<rect x="151" y="291" width="3" height="6" fill="#000" />
<rect x="152" y="294" width="1" height="2" fill="#fff" />
<rect x="155" y="291" width="3" height="6" fill="#000" />
<rect x="156" y="294" width="1" height="2" fill="#fff" />
<rect x="226.5" y="225.5" width="31" height="31" fill="#FFFFCC" stroke="#000" stroke-width="1" />
<rect x="236" y="231" width="12" height="5" fill="#000" />
<rect x="236" y="248" width="12" height="4" fill="#000" />
<rect x="234.5" y="236.5" width="15" height="11" rx="2" fill="#FFFFCC" stroke="#000" stroke-width="1.5"/>
<rect x="250" y="240" width="2" height="3" fill="#000" />
<path d="M241.5 238v5l2-3" stroke="#000" fill="none"/>
<rect x="237" y="241" width="1" height="1" fill="#000" />
<rect x="246" y="241" width="1" height="1" fill="#000" />
<rect x="241" y="245" width="1" height="1" fill="#000" />
<rect x="380.5" y="272.5" width="71" height="18" fill="#FFFFCC" stroke="#000" stroke-width="1" />
<rect x="380.5" y="290.5" width="71" height="15" fill="#fff" stroke="#000" stroke-width="1" />
<text x="412" y="285" font-family="Liberation Sans" font-size="11" fill="#000" >Instr</text>
<path d="M394 281h7" stroke="#000" stroke-width="2"/>
<circle cx="403" cy="281" r="2.3" fill="none" stroke="#000" stroke-width="1.5" shape-rendering="auto"/>
<path d="M384.5 274.5h3l2 2v3h-5z" fill="#FFFFCC" stroke="#000"/>
<text x="384" y="289" font-family="Liberation Sans" font-size="7" fill="#000" font-weight="bold" textLength="6" lengthAdjust="spacingAndGlyphs">?!</text>
<path d="M444.5 274.5h3l2 2v3h-5z" fill="#FFFFCC" stroke="#000"/>
<text x="444" y="289" font-family="Liberation Sans" font-size="7" fill="#000" font-weight="bold" textLength="6" lengthAdjust="spacingAndGlyphs">?!</text>
<text x="382" y="302" font-family="Liberation Sans" font-size="11" fill="#0000FF" >Bytes at Port</text>
<path d="M447 294l4 3.5-4 3.5z" fill="#000"/>
<rect x="528.5" y="271.5" width="31" height="31" fill="#FFFFCC" stroke="#000" stroke-width="1" />
<text x="530" y="279" font-family="Liberation Sans" font-size="8" fill="#000" font-style="italic" textLength="16" lengthAdjust="spacingAndGlyphs">VISA</text>
<text x="530" y="289.5" font-family="Liberation Sans" font-size="9.5" fill="#000" textLength="14" lengthAdjust="spacingAndGlyphs">abc</text>
<text x="530.5" y="300.5" font-family="Liberation Sans" font-size="9" fill="#000" font-weight="bold">R</text>
<rect x="551" y="272" width="7" height="3" fill="#000" />
<rect x="551" y="283" width="7" height="2" fill="#000" />
<rect x="558" y="272" width="2" height="15" fill="#000" />
<rect x="549.5" y="274.5" width="9" height="9" rx="3" fill="none" stroke="#000"/>
<path d="M554.5 276v4h-2" fill="none" stroke="#000"/>
<path d="M546 285l4 1-2 2z M549 287l4 3" stroke="#000" fill="#000" stroke-width="0.8" shape-rendering="auto"/>
<rect x="541.5" y="292.5" width="16" height="8" fill="#fff" stroke="#000" stroke-width="1" />
<rect x="543.5" y="294.5" width="12" height="4" fill="#fff" stroke="#000" stroke-width="1" />
<path d="M545 296.5c1-2 2 2 3 0s2 2 3 0" fill="none" stroke="#000" stroke-width="0.8" shape-rendering="auto"/>
<rect x="552" y="294" width="1" height="5" fill="#000" />
<rect x="554" y="295" width="2" height="1" fill="#000" />
<rect x="554" y="297" width="2" height="1" fill="#000" />
<rect x="602.5" y="380.5" width="31" height="31" fill="#FFFFCC" stroke="#000" stroke-width="1" />
<rect x="602" y="382" width="27" height="9" fill="#000" />
<rect x="603" y="383" width="25" height="7" fill="url(#pT)" />
<rect x="607.5" y="382.5" width="16" height="8" fill="#fff" stroke="#000" stroke-width="1" />
<rect x="609" y="384" width="2" height="5" fill="#000" />
<rect x="609" y="384" width="4" height="1" fill="#000" />
<rect x="609" y="386" width="3" height="1" fill="#000" />
<rect x="614" y="384" width="2" height="5" fill="#000" />
<rect x="614" y="384" width="4" height="1" fill="#000" />
<rect x="614" y="386" width="3" height="1" fill="#000" />
<rect x="619" y="384" width="2" height="5" fill="#000" />
<rect x="619" y="384" width="4" height="1" fill="#000" />
<rect x="619" y="386" width="3" height="1" fill="#000" />
<rect x="604" y="394" width="3" height="3" fill="#000" />
<path d="M608.5 395.5h2v-3M609 393.5h3" fill="none" stroke="#000"/>
<rect x="628" y="394" width="3" height="3" fill="#000" />
<path d="M622.5 392v2h1M625 396h1" fill="none" stroke="#000"/>
<rect x="604.5" y="403.5" width="5" height="5" fill="#fff" stroke="#000" stroke-width="1" />
<rect x="606" y="405" width="2" height="2" fill="#000" />
<rect x="613" y="406" width="1" height="1" fill="#000" />
<rect x="615" y="406" width="1" height="1" fill="#000" />
<rect x="617" y="406" width="1" height="1" fill="#000" />
<path d="M619 406.5h4M621.5 404.5l2 2-2 2" fill="none" stroke="#000"/>
<path d="M627.5 403v6M629.5 403v6M626 404.5h5M626 407.5h5" fill="none" stroke="#000"/>
<path d="M735.5 354.5V375.5L756 365Z" fill="#FFFFCC" stroke="#000" shape-rendering="auto"/>
<path d="M739.5 362l4 4M743.5 362l-4 4" stroke="#000" stroke-width="1.6" shape-rendering="auto"/>
<path d="M735 356l3 3-3 2z" fill="#FF0000"/>
<path d="M790.5 359.5V380.5L811 370Z" fill="#FFFFCC" stroke="#000" shape-rendering="auto"/>
<rect x="795" y="369" width="5" height="2" fill="#000" />
<rect x="702" y="407" width="27" height="15" fill="#fff" stroke="#FF7F00" stroke-width="2" />
<text x="704" y="419" font-family="Liberation Sans" font-size="11" fill="#000" >0,02</text>
<rect x="754" y="409" width="39" height="15" fill="#fff" stroke="#FF7F00" stroke-width="2" />
<text x="756" y="421" font-family="Liberation Sans" font-size="11" fill="#000" >273,15</text>
<rect x="843.5" y="411.5" width="37" height="37" fill="#fff" stroke="#FF7F00" stroke-width="1" />
<rect x="846.5" y="414.5" width="31" height="32" fill="#B8B8B8" stroke="#FF7F00" stroke-width="1" />
<rect x="847" y="415" width="30" height="1" fill="#E0E0E0" />
<rect x="847" y="415" width="1" height="31" fill="#E0E0E0" />
<rect x="847" y="444" width="30" height="2" fill="#8090A0" />
<rect x="875" y="415" width="2" height="31" fill="#8A8A8A" />
<rect x="854" y="417" width="19" height="18" fill="#000" />
<rect x="854" y="435" width="19" height="1" fill="#E8E8E8" />
<rect x="873" y="417" width="1" height="19" fill="#E8E8E8" />
<path d="M856 427h5l2-2 1-4v-3M864 421l2 5 2 2 2-1h2" fill="none" stroke="#fff" shape-rendering="auto"/>
<path d="M862 421h3M862 423h3M864 425h3M866 428h3M867 430h3" stroke="#C0C0C0" stroke-width="0.8"/>
<text x="849" y="422" font-family="Liberation Sans" font-size="6" fill="#000" font-weight="bold">2</text>
<text x="849" y="437" font-family="Liberation Sans" font-size="6" fill="#000" font-weight="bold">0</text>
<text x="853" y="441" font-family="Liberation Sans" font-size="5.5" fill="#000" font-weight="bold">0.0</text>
<text x="866" y="441" font-family="Liberation Sans" font-size="5.5" fill="#000" font-weight="bold">10</text>
<rect x="854.5" y="440.5" width="15" height="8" fill="#fff" stroke="#FF7F00" stroke-width="1" />
<text x="856" y="447.5" font-family="Liberation Sans" font-size="7" fill="#FF7F00" font-weight="bold" textLength="12" lengthAdjust="spacingAndGlyphs">DBL</text>
<path d="M845.5 426.5l6 4-6 4z" fill="#fff" stroke="#000"/>
<rect x="818" y="487" width="38" height="38" fill="#008000" />
<rect x="820" y="489" width="34" height="34" fill="#fff" />
<rect x="821" y="490" width="32" height="32" fill="#008000" />
<rect x="822" y="491" width="30" height="30" fill="#B4B0B4" />
<rect x="823.5" y="499.5" width="27" height="14" fill="#DCDCDC" stroke="#808080" stroke-width="1" />
<text x="828" y="509.5" font-family="Liberation Sans" font-size="7.5" fill="#E00000" font-weight="bold" textLength="18" lengthAdjust="spacingAndGlyphs">STOP</text>
<rect x="829" y="516" width="17" height="9" fill="#008000" />
<rect x="830" y="517" width="15" height="8" fill="#fff" />
<text x="831.5" y="524" font-family="Liberation Sans" font-size="8" fill="#008000" font-weight="bold">T F</text>
<path d="M850.5 502.5l5 4-5 4z" fill="#fff" stroke="#000" shape-rendering="auto"/>
<rect x="886.5" y="503.5" width="15" height="15" fill="#FFFFCC" stroke="#008000" stroke-width="1" />
<path d="M891.5 505.5h5l3 3v5l-3 3h-5l-3-3v-5z" fill="none" stroke="#000"/>
<path d="M892 507h4l2 2v4l-2 2h-4l-2-2v-4z" fill="#FF0000"/>
<rect x="193" y="506" width="14" height="14" fill="#FFFFCC" stroke="#0000FF" stroke-width="2" />
<text x="197.5" y="518" font-family="Liberation Sans" font-size="10.5" fill="#0000FF" font-weight="bold" stroke="#0000FF" stroke-width="0.4">i</text>
<rect x="349.5" y="369.5" width="8" height="11" fill="#FFFFCC" stroke="#008000" stroke-width="1" />
<text x="350" y="379" font-family="Liberation Sans" font-size="9" fill="#008000" >?</text>
<rect x="954" y="268" width="34" height="34" fill="#000" />
<rect x="954.5" y="268.5" width="33" height="33" fill="none" stroke="#fff" stroke-width="1" stroke-dasharray="1 4" stroke-dashoffset="-3"/>
<rect x="956" y="270" width="30" height="30" fill="#FFFFCC" />
<text x="957" y="277.5" font-family="Liberation Sans" font-size="8" fill="#000" font-style="italic" stroke="#000" stroke-width="0.25" textLength="17" lengthAdjust="spacingAndGlyphs">VISA</text>
<text x="957.5" y="299.5" font-family="Liberation Sans" font-size="10.5" fill="#000" font-weight="bold">C</text>
<path d="M977.5 278.5l9 10-10 11-9-10z" fill="none" stroke="#000" shape-rendering="auto"/>
<path d="M969 291l8 9M986 289l-9 11" stroke="#000" stroke-dasharray="1 1" shape-rendering="auto"/>
<path d="M965.5 284c2-3 6-3 9 0" fill="none" stroke="#000" stroke-width="1.5" shape-rendering="auto"/>
<rect x="974" y="284" width="2" height="3" fill="#000" />
<path d="M971.5 288l3 3 4-5" fill="none" stroke="#000" shape-rendering="auto"/>
</g></svg>

<svg class="a" style="left:0;top:0" width="1024" height="26">
 <defs>
  <linearGradient id="gbl" x1="0" y1="0" x2="1" y2="1"><stop offset="0" stop-color="#7AA6FA"/><stop offset="0.35" stop-color="#3C74F0"/><stop offset="1" stop-color="#2258E0"/></linearGradient>
  <linearGradient id="grd" x1="0" y1="0" x2="1" y2="1"><stop offset="0" stop-color="#F4A080"/><stop offset="0.35" stop-color="#E2603A"/><stop offset="1" stop-color="#CC4418"/></linearGradient>
 </defs>
 <g shape-rendering="auto">
  <rect x="955.5" y="2.5" width="20" height="20" rx="3" fill="url(#gbl)" stroke="#fff"/>
  <rect x="978.5" y="2.5" width="20" height="20" rx="3" fill="url(#gbl)" stroke="#fff"/>
  <rect x="1001.5" y="2.5" width="20" height="20" rx="3" fill="url(#grd)" stroke="#fff"/>
  <path d="M1007 8l9 9M1016 8l-9 9" stroke="#fff" stroke-width="2.2"/>
 </g>
 <g shape-rendering="crispEdges">
  <rect x="960" y="15" width="7" height="3" fill="#fff"/>
  <rect x="984" y="10" width="7" height="7" fill="none" stroke="#fff" stroke-width="1"/>
  <rect x="983.5" y="10" width="8" height="2" fill="#fff"/>
  <path d="M987 8.5h6.5v6.5" fill="none" stroke="#fff" stroke-width="1"/>
  <rect x="987" y="7" width="7" height="2" fill="#fff"/>
  <!-- title icon -->
  <rect x="4" y="4" width="13" height="13" fill="#8A8078"/>
  <rect x="5" y="7" width="11" height="7" fill="#000"/>
  <g fill="#E8E8E8"><rect x="5" y="5" width="1" height="1"/><rect x="7" y="5" width="1" height="1"/><rect x="9" y="5" width="1" height="1"/><rect x="11" y="5" width="1" height="1"/><rect x="13" y="5" width="1" height="1"/><rect x="15" y="5" width="1" height="1"/>
  <rect x="5" y="15" width="1" height="1"/><rect x="7" y="15" width="1" height="1"/><rect x="9" y="15" width="1" height="1"/><rect x="11" y="15" width="1" height="1"/><rect x="13" y="15" width="1" height="1"/><rect x="15" y="15" width="1" height="1"/></g>
  <rect x="9" y="7" width="1" height="2" fill="#00A000"/><rect x="13" y="7" width="2" height="5" fill="#00A000"/>
  <rect x="2" y="9" width="4" height="1" fill="#FF0000"/>
  <rect x="2" y="13" width="4" height="1" fill="#0000FF"/>
  <rect x="14" y="11" width="4" height="1" fill="#FF0000"/>
 </g>
 <path d="M6 7L14 11.5L6 16Z" fill="#F0D000" shape-rendering="auto"/>
 <path d="M9.5 9.5v4M7.5 11.5h4" stroke="#222" stroke-width="1.3"/>
</svg>
<!-- v scroll parts -->
<svg class="a" style="left:0;top:0" width="1024" height="768" shape-rendering="auto">
 <defs>
  <linearGradient id="sth" x1="0" y1="0" x2="1" y2="0"><stop offset="0" stop-color="#B8CAF6"/><stop offset="0.25" stop-color="#CAD8FA"/><stop offset="0.75" stop-color="#C4D4FC"/><stop offset="1" stop-color="#AEC4F6"/></linearGradient>
  <linearGradient id="stv" x1="0" y1="0" x2="0" y2="1"><stop offset="0" stop-color="#B8CAF6"/><stop offset="0.25" stop-color="#CAD8FA"/><stop offset="0.75" stop-color="#C4D4FC"/><stop offset="1" stop-color="#AEC4F6"/></linearGradient>
  <linearGradient id="sbt" x1="0" y1="0" x2="1" y2="1"><stop offset="0" stop-color="#DCE6FC"/><stop offset="1" stop-color="#B0C8F8"/></linearGradient>
 </defs>
 <rect x="1006.5" y="74.5" width="14" height="15" rx="2" fill="url(#sbt)" stroke="#fff"/>
 <path d="M1007 90.5H1020.5M1021.5 75V89.5" stroke="#8CACE0" shape-rendering="crispEdges"/>
 <path d="M1009.5 85l4.5-4.5 4.5 4.5" fill="none" stroke="#4D6185" stroke-width="2"/>
 <rect x="1006.5" y="196.5" width="14" height="501" rx="2" fill="url(#sth)" stroke="#fff"/>
 <path d="M1007 698.5H1020.5M1021.5 197V697.5" stroke="#8CACE0" shape-rendering="crispEdges"/>
 <g stroke="#EEF2FF" shape-rendering="crispEdges"><path d="M1010 442.5h7M1010 444.5h7M1010 446.5h7M1010 448.5h7"/></g>
 <g stroke="#8CA8F0" shape-rendering="crispEdges"><path d="M1011 443.5h7M1011 445.5h7M1011 447.5h7M1011 449.5h7"/></g>
 <rect x="1006.5" y="699.5" width="14" height="15" rx="2" fill="url(#sbt)" stroke="#fff"/>
 <path d="M1007 715.5H1020.5M1021.5 700V714.5" stroke="#8CACE0" shape-rendering="crispEdges"/>
 <path d="M1009.5 704l4.5 4.5 4.5-4.5" fill="none" stroke="#4D6185" stroke-width="2"/>
 <rect x="2.5" y="716.5" width="15" height="14" rx="2" fill="url(#sbt)" stroke="#fff"/>
 <path d="M3 731.5H17.5M18.5 717V730.5" stroke="#8CACE0" shape-rendering="crispEdges"/>
 <path d="M12 719l-4.5 4.5 4.5 4.5" fill="none" stroke="#4D6185" stroke-width="2"/>
 <rect x="176.5" y="716.5" width="613" height="14" rx="2" fill="url(#stv)" stroke="#fff"/>
 <path d="M177 731.5H789.5M790.5 717V730.5" stroke="#8CACE0" shape-rendering="crispEdges"/>
 <g stroke="#EEF2FF" shape-rendering="crispEdges"><path d="M478.5 720v7M480.5 720v7M482.5 720v7M484.5 720v7"/></g>
 <g stroke="#8CA8F0" shape-rendering="crispEdges"><path d="M479.5 721v7M481.5 721v7M483.5 721v7M485.5 721v7"/></g>
 <rect x="989.5" y="716.5" width="15" height="14" rx="2" fill="url(#sbt)" stroke="#fff"/>
 <path d="M990 731.5H1004.5M1005.5 717V730.5" stroke="#8CACE0" shape-rendering="crispEdges"/>
 <path d="M994.5 719l4.5 4.5-4.5 4.5" fill="none" stroke="#4D6185" stroke-width="2"/>
</svg>

<div class="a" style="left:0;top:734px;width:1024px;height:34px;background:linear-gradient(to bottom,#2A5FC8 0px,#2A5FC8 1px,#3A88EE 1px,#3A88EE 4px,#2C68D8 4px,#2C68D8 5px,#4A90E6 5px,#4A90E6 7px,#2A68DE 8px,#2258D8 13px,#2258D8 20px,#2462E0 30px,#2060D8 32px,#1A48B0 34px)"></div>
<!-- start button -->
<div class="a" style="left:0;top:738px;width:97px;height:30px;border-radius:0 12px 0 0/0 15px 0 0;background:linear-gradient(to bottom,#5EAE5E 0px,#3C9A3C 3px,#349034 8px,#3A9E3A 20px,#43AA43 26px,#2F8A2F 30px);box-shadow:inset -3px 0 3px #1C6A1C"></div>
<svg class="a" style="left:0;top:734px" width="1024" height="34">
 <g shape-rendering="auto">
  <path d="M13 12c2-2 5-2 8 0l-2 7c-3-2-5-2-8 0z" fill="#E8501C"/>
  <path d="M22 12c2 1 5 1 8 0l-2 7c-3 1-5 1-8 0z" fill="#6CC030"/>
  <path d="M11 20c2-2 5-2 8 0l-2 7c-3-2-5-2-8 0z" fill="#3C7CE8"/>
  <path d="M20 20c2 1 5 1 8 0l-2 7c-3 1-5 1-8 0z" fill="#F8C810"/>
 </g>
 <text x="34" y="25" font-family="Liberation Sans" font-size="17.5" font-weight="bold" font-style="italic" fill="#fff" style="text-shadow:1px 1px 1px #1a4a1a" letter-spacing="0">start</text>
 <!-- quick launch grip -->
 <g fill="#1A3A9A">
  <rect x="106" y="10" width="2" height="2"/><rect x="109" y="13" width="2" height="2"/><rect x="106" y="16" width="2" height="2"/><rect x="109" y="19" width="2" height="2"/><rect x="106" y="22" width="2" height="2"/><rect x="109" y="25" width="2" height="2"/><rect x="106" y="28" width="2" height="2"/>
  <rect x="235" y="10" width="2" height="2"/><rect x="238" y="13" width="2" height="2"/><rect x="235" y="16" width="2" height="2"/><rect x="238" y="19" width="2" height="2"/><rect x="235" y="22" width="2" height="2"/><rect x="238" y="25" width="2" height="2"/><rect x="235" y="28" width="2" height="2"/>
 </g>
 <!-- quick launch icons -->
 <rect x="119" y="12" width="16" height="14" fill="#222"/>
 <rect x="119" y="12" width="15" height="13" fill="#A8A8A0"/>
 <rect x="120" y="13" width="13" height="11" fill="#fff"/>
 <rect x="120" y="13" width="13" height="3" fill="#1020A0"/>
 <rect x="127" y="14" width="1" height="1" fill="#fff"/><rect x="129" y="14" width="1" height="1" fill="#fff"/><rect x="131" y="14" width="1" height="1" fill="#fff"/>
 <g shape-rendering="auto">
  <circle cx="149" cy="19" r="5.5" fill="none" stroke="#38A8F4" stroke-width="3"/>
  <rect x="143" y="18" width="12" height="2" fill="#38A8F4"/>
  <rect x="150" y="20.5" width="6" height="3" fill="#245EDC"/>
  <path d="M142 27c-2-2 5-12 14-14" fill="none" stroke="#60C0FF" stroke-width="1.3"/>
  <rect x="165.5" y="11.5" width="14" height="15" rx="2" fill="#2E6AD0" stroke="#9CC8F8"/>
  <path d="M168 14h7l2 2v8h-9z" fill="#F0F4FF" stroke="#305090" stroke-width="0.8"/>
  <path d="M170 22l5-5" stroke="#202020" stroke-width="1.3"/>
  <circle cx="177" cy="14" r="1.5" fill="#F06020"/>
  <circle cx="195.5" cy="19" r="7" fill="#F4F8FF"/>
  <path d="M195.5 12a7 7 0 0 1 6 3.5" fill="none" stroke="#30B030" stroke-width="1.8"/>
  <path d="M201.5 15.5a7 7 0 0 1-1 8" fill="none" stroke="#F0B020" stroke-width="1.8"/>
  <path d="M200.5 23.5a7 7 0 0 1-10 0" fill="none" stroke="#3070E0" stroke-width="1.8"/>
  <path d="M190.5 23.5a7 7 0 0 1 5-11.5" fill="none" stroke="#E05030" stroke-width="1.8"/>
  <path d="M193 15.5l5.5 3.5-5.5 3.5z" fill="#1A3A8A"/>
 </g>
 <!-- task buttons -->
 <rect x="247" y="8" width="95" height="23" rx="3" fill="#3C81F3"/>
 <rect x="344" y="8" width="95" height="23" rx="3" fill="#3C81F3"/>
 <rect x="440" y="8" width="97" height="23" rx="3" fill="#1E4BB8"/>
 <rect x="538" y="8" width="95" height="23" rx="3" fill="#3C81F3"/>
 <rect x="635" y="8" width="95" height="23" rx="3" fill="#3C81F3"/>
 <rect x="732" y="8" width="95" height="23" rx="3" fill="#3C81F3"/>
 <g font-family="Liberation Sans" font-size="11" fill="#fff">
  <text x="276" y="23">Filter de...</text>
  <text x="372" y="23">IR_Sens...</text>
  <text x="469" y="23">IR_Sens...</text>
  <text x="565" y="23">LabVIE...</text>
  <text x="662" y="23">My Com...</text>
  <text x="759" y="23">Docume...</text>
 </g>
 <g shape-rendering="auto">
  <circle cx="264" cy="19" r="5.5" fill="none" stroke="#38A8F4" stroke-width="3"/>
  <rect x="258" y="18" width="12" height="2" fill="#38A8F4"/>
  <rect x="265" y="20.5" width="6" height="3" fill="#3C81F3"/>
  <path d="M257 27c-2-2 5-12 14-14" fill="none" stroke="#E8C040" stroke-width="1.3"/>
 </g>
 <g shape-rendering="crispEdges">
  <rect x="354" y="10" width="14" height="14" fill="#7A7068"/>
  <rect x="355" y="13" width="12" height="8" fill="#000"/>
  <path d="M355.5 11.5h11M355.5 22.5h11" stroke="#E0E0E0" stroke-dasharray="1 1"/>
  <rect x="364" y="14" width="2" height="5" fill="#00A000"/>
  <path d="M356 13L365 17.5L356 22Z" fill="#F0D800" shape-rendering="auto"/>
  <path d="M359.5 15.5v4M357.5 17.5h4" stroke="#222"/>
  <rect x="351" y="15" width="5" height="1" fill="#FF0000"/>
  <rect x="351" y="19" width="5" height="1" fill="#0000FF"/>
  <rect x="366" y="17" width="5" height="1" fill="#FF0000"/>
  <rect x="451" y="10" width="14" height="14" fill="#7A7068"/>
  <rect x="452" y="13" width="12" height="8" fill="#000"/>
  <path d="M452.5 11.5h11M452.5 22.5h11" stroke="#E0E0E0" stroke-dasharray="1 1"/>
  <rect x="461" y="14" width="2" height="5" fill="#00A000"/>
  <path d="M453 13L462 17.5L453 22Z" fill="#F0D800" shape-rendering="auto"/>
  <path d="M456.5 15.5v4M454.5 17.5h4" stroke="#222"/>
  <rect x="448" y="15" width="5" height="1" fill="#FF0000"/>
  <rect x="448" y="19" width="5" height="1" fill="#0000FF"/>
  <rect x="463" y="17" width="5" height="1" fill="#FF0000"/>
  <rect x="547" y="15" width="9" height="11" fill="#fff" stroke="#6A6050" stroke-width="1"/>
  <path d="M549 19h5M549 21h5M549 23h5" stroke="#808080"/>
 </g>
 <g shape-rendering="auto">
  <path d="M553.5 14.5c0-3 7-3 7 0.5 0 2-3 3-3 5" fill="none" stroke="#000" stroke-width="3.6"/>
  <path d="M553.5 14.5c0-3 7-3 7 0.5 0 2-3 3-3 5" fill="none" stroke="#F4F000" stroke-width="2"/>
  <rect x="556" y="22" width="4" height="3" fill="#F4F000" stroke="#000" stroke-width="1"/>
  <path d="M644.5 14.5h5l1.5 2h7v8.5h-13.5z" fill="#E8B848" stroke="#A07018" stroke-width="1"/>
  <rect x="645" y="17" width="13" height="2" fill="#FFF0B0"/>
  <circle cx="650" cy="20.5" r="3.2" fill="#C8E8FF" stroke="#E0F0FF" stroke-width="0.8"/>
  <path d="M652.5 23l3 2.5" stroke="#C08040" stroke-width="1.5"/>
 </g>
 <g shape-rendering="crispEdges">
  <rect x="744.5" y="11.5" width="12" height="14" fill="#E4ECFC" stroke="#304880"/>
  <path d="M747 22h8" stroke="#6080C0"/>
  <rect x="741.5" y="12.5" width="10" height="9" fill="#fff" stroke="#1A3A9A"/>
 </g>
 <text x="742.3" y="20.5" font-family="Liberation Sans" font-size="8.5" font-weight="bold" font-style="italic" fill="#1A3A9A" textLength="9" lengthAdjust="spacingAndGlyphs">W</text>
 <!-- tray -->
 <rect x="841" y="4" width="183" height="30" fill="#0F96EC"/>
 <rect x="841" y="4" width="1" height="30" fill="#1CC8F8"/>
 <rect x="842" y="4" width="182" height="2" fill="#17A8F0"/>
 <rect x="842" y="31" width="182" height="3" fill="#0C80D8"/>
 <g shape-rendering="auto">
  <rect x="852" y="11" width="16" height="16" rx="2.5" fill="#E86C18" stroke="#B04A08" stroke-width="0.6"/>
  <path d="M855 24.5h9M856 22h7M859 20l4-5" stroke="#fff" stroke-width="1.2" fill="none"/>
  <path d="M863 21a2 2 0 0 1 0 3" stroke="#fff" fill="none"/>
  <rect x="871" y="14" width="12" height="12" fill="#C00808"/>
  <path d="M873.5 24l3.5-4 1.5-5M877 20l4 2" stroke="#fff" fill="none" stroke-width="0.9"/>
  <circle cx="881" cy="14" r="2.3" fill="#F0E090" stroke="#E08040" stroke-width="0.8"/>
  <path d="M889 12l5 7M899 12l-5 7" stroke="#1848A8" stroke-width="3" stroke-linecap="round"/>
  <path d="M888.5 22.5h14M898 20l3 2.5-3 2.5" stroke="#000" stroke-width="1.6" fill="none"/>
  <circle cx="889" cy="22.5" r="1.5" fill="#000"/>
  <rect x="906.5" y="11.5" width="15" height="15" fill="#1E52B0" stroke="#D8E0F0"/>
  <circle cx="913" cy="17" r="0.8" fill="#C0D0F0"/><circle cx="916" cy="17" r="0.8" fill="#C0D0F0"/><circle cx="913" cy="20" r="0.8" fill="#C0D0F0"/><circle cx="916" cy="20" r="0.8" fill="#C0D0F0"/><circle cx="914.5" cy="14.5" r="0.8" fill="#C0D0F0"/>
  <path d="M928.5 11h7l4.5 4.5v7l-4.5 4.5h-7l-4.5-4.5v-7z" fill="#0000F0" stroke="#000" stroke-width="0.6"/>
  <path d="M924.5 19h3.5l1.5-4 1.5 8 1.5-9 1.5 9 1.5-6 1 2h3.5" stroke="#F8F000" fill="none" stroke-width="1"/>
  <rect x="948" y="11.5" width="7" height="6" fill="#303060" stroke="#A8A0E0" stroke-width="1"/>
  <rect x="942" y="15.5" width="7" height="6" fill="#303060" stroke="#A8A0E0" stroke-width="1"/>
  <ellipse cx="945.5" cy="24" rx="3.5" ry="1.8" fill="#E8E8F8"/>
  <ellipse cx="951.5" cy="20.5" rx="3" ry="1.5" fill="#D0D0E8"/>
  <ellipse cx="966" cy="18.5" rx="4.5" ry="6" fill="#707070"/>
  <circle cx="964" cy="17.5" r="2" fill="#C8C8D0"/>
  <path d="M970 26c3-2 4-4 5-7M968 27c3-1 5-3 7-6" stroke="#B8B8F0" fill="none" stroke-width="0.8"/>
 </g>
 <text x="983" y="23" font-family="Liberation Sans" font-size="11" fill="#fff">10:33</text>
</svg>

</body></html>
